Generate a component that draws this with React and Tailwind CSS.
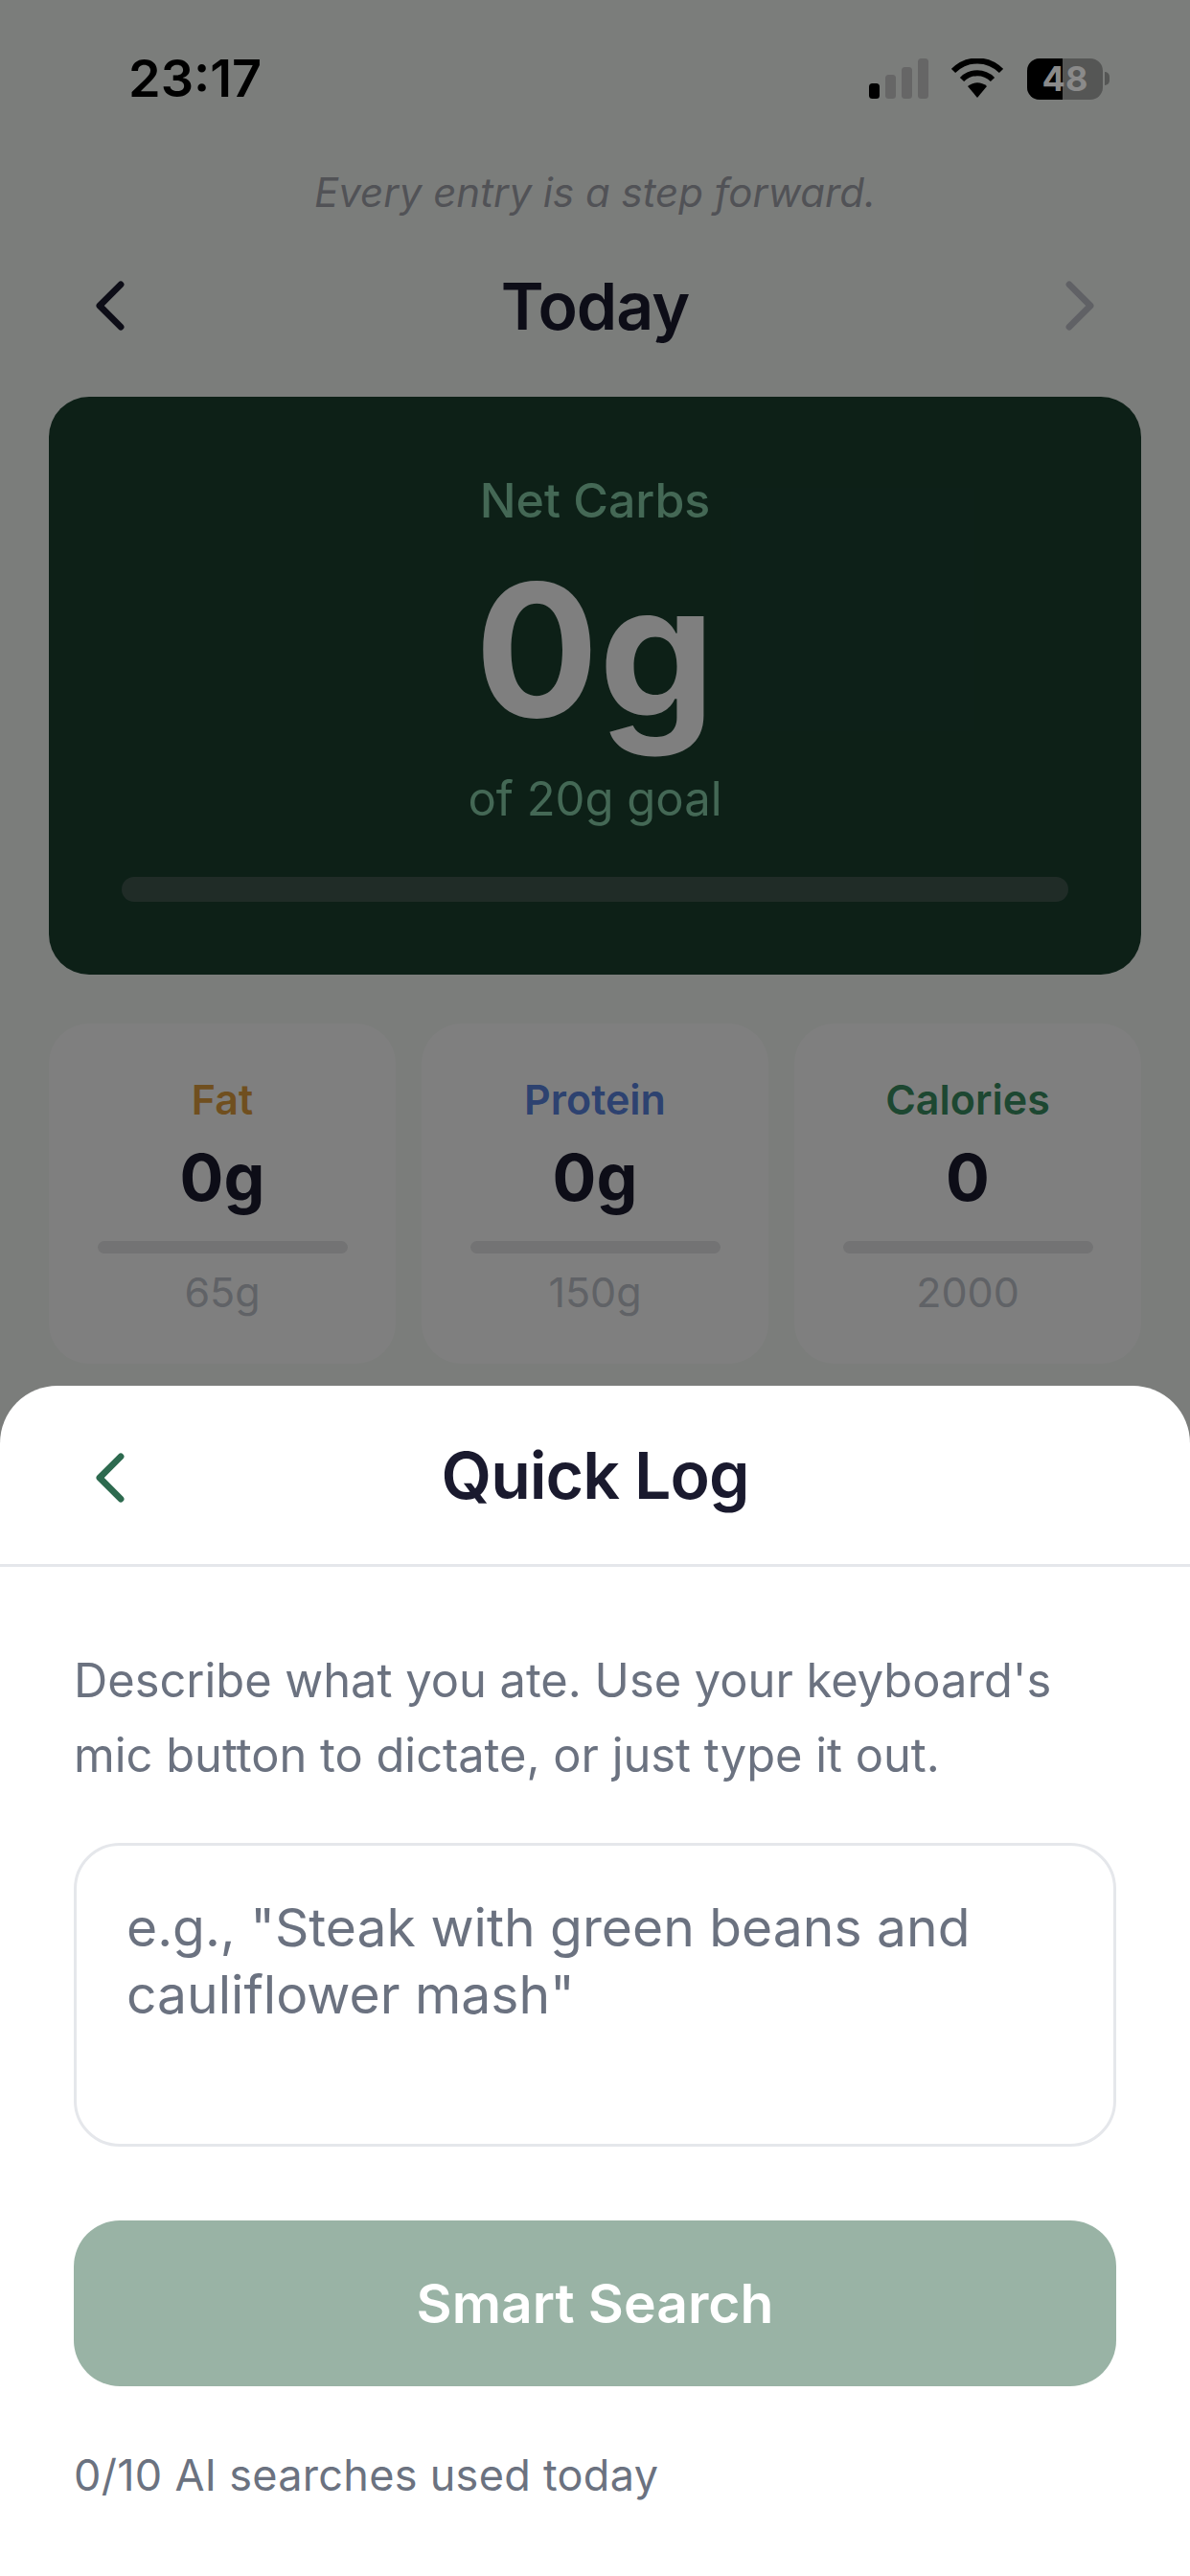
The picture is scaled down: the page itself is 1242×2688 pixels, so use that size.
import React from 'react';

const macros = [
  { label: 'Fat', value: '0g', goal: '65g', color: 'text-[#e09f3e]' },
  { label: 'Protein', value: '0g', goal: '150g', color: 'text-[#5b84e0]' },
  { label: 'Calories', value: '0', goal: '2000', color: 'text-[#3a8f63]' },
];

function Chevron({ dir = 'left', className }) {
  return (
    <svg viewBox="0 0 32 54" className={className} fill="none" stroke="currentColor" strokeWidth="7" strokeLinecap="round" strokeLinejoin="round">
      {dir === 'left' ? <path d="M28 4 L5 27 L28 50" /> : <path d="M4 4 L27 27 L4 50" />}
    </svg>
  );
}

function StatusIcons() {
  return (
    <div className="flex items-center">
      <svg viewBox="0 0 62 42" className="w-[62px] h-[42px]">
        <rect x="0" y="26" width="11" height="16" rx="3.5" fill="#000" />
        <rect x="17" y="17" width="11" height="25" rx="3.5" fill="#666" />
        <rect x="34" y="9" width="11" height="33" rx="3.5" fill="#666" />
        <rect x="51" y="0" width="11" height="42" rx="3.5" fill="#666" />
      </svg>
      <svg viewBox="0 0 54 42" className="w-[54px] h-[42px] ml-[24px]">
        <path d="M2 13 C16 -1 38 -1 52 13" fill="none" stroke="#000" strokeWidth="6" />
        <path d="M11 22 C20 13 34 13 43 22" fill="none" stroke="#000" strokeWidth="6" />
        <path d="M17 29 C23 24 31 24 37 29 L27 41 Z" fill="#000" />
      </svg>
      <div className="relative ml-[25px] w-[79px] h-[43px] rounded-[13px] overflow-hidden flex bg-[#555655]">
        <div className="w-[37px] h-full bg-black" />
        <span className="absolute inset-0 flex items-center justify-center text-[36px] leading-none font-bold text-[#8a8a8a]">48</span>
      </div>
      <div className="ml-[2px] w-[5px] h-[14px] rounded-r-full bg-[#555655]" />
    </div>
  );
}

export default function App() {
  return (
    <div className="relative w-[1242px] h-[2688px] overflow-hidden bg-[#f7faf7] font-['Inter',sans-serif]">
      {/* page under the sheet */}
      <div className="flex flex-col">
        <div className="relative z-20 flex items-center justify-between pt-[53px] pl-[134px] pr-[84px] h-[111px]">
          <span className="text-[54px] leading-none font-semibold text-black">23:17</span>
          <StatusIcons />
        </div>

        <p className="mt-[61px] text-center italic text-[42px] leading-[58px] text-[#a3a5ad]">Every entry is a step forward.</p>

        <div className="mt-[50px] flex items-center justify-between px-[99px] h-[78px]">
          <Chevron className="w-[31px] h-[52px] text-[#1a1a2e]" />
          <h1 className="text-[68px] leading-none font-semibold tracking-[-1px] text-[#1a1a2e]">Today</h1>
          <Chevron dir="right" className="w-[31px] h-[52px] text-[#c0c2cb]" />
        </div>

        <section className="mt-[56px] mx-[51px] h-[603px] rounded-[42px] bg-[#1a402f] flex flex-col items-center pt-[83px]">
          <div className="text-[50px] leading-[50px] font-medium text-[#88d0ab]">Net Carbs</div>
          <div className="mt-[36px] text-[192px] leading-[190px] font-bold text-white">0g</div>
          <div className="mt-[32px] text-[49px] leading-[58px] text-[#88d0ab]">of 20g goal</div>
          <div className="mt-[52px] w-[988px] h-[26px] rounded-full bg-[#40584f]" />
        </section>

        <section className="mt-[51px] mx-[51px] grid grid-cols-3 gap-[27px]">
          {macros.map((m) => (
            <div key={m.label} className="h-[355px] rounded-[42px] bg-white flex flex-col items-center pt-[54px]">
              <div className={`text-[43px] leading-[50px] font-semibold ${m.color}`}>{m.label}</div>
              <div className="mt-[14px] text-[68px] leading-[84px] font-bold text-[#1a1a2e]">{m.value}</div>
              <div className="mt-[25px] w-[261px] h-[13px] rounded-full bg-[#e6e7e9]" />
              <div className="mt-[13px] text-[43px] leading-[54px] text-[#c0c4cc]">{m.goal}</div>
            </div>
          ))}
        </section>
      </div>

      {/* dim layer */}
      <div className="absolute inset-0 z-10 bg-black/50" />

      {/* bottom sheet */}
      <div className="absolute inset-x-0 bottom-0 z-30 h-[1242px] rounded-t-[60px] bg-white flex flex-col">
        <div className="relative h-[189px] border-b-[3px] border-[#e5e7eb] flex items-center justify-center">
          <Chevron className="absolute left-[99px] top-[70px] w-[31px] h-[52px] text-[#2d6a4f]" />
          <h2 className="text-[68px] leading-none font-semibold tracking-[-1px] text-[#1a1a2e]">Quick Log</h2>
        </div>

        <div className="flex flex-col px-[77px] pt-[80px]">
          <p className="text-[48.8px] leading-[78px] text-[#6b7280]">
            Describe what you ate. Use your keyboard's mic button to dictate, or just type it out.
          </p>
          <div className="mt-[52px] h-[317px] rounded-[48px] border-[3px] border-[#e5e7eb] px-[52px] pt-[50px] text-[55.2px] leading-[70px] text-[#6b7280]">
            e.g., "Steak with green beans and cauliflower mash"
          </div>
          <button className="mt-[77px] h-[173px] rounded-[48px] bg-[#99b3a5] text-white text-[57px] font-semibold">
            Smart Search
          </button>
          <p className="mt-[67px] text-[45px] leading-[52px] tracking-[0.3px] text-[#6b7280]">0/10 AI searches used today</p>
        </div>
      </div>
    </div>
  );
}
